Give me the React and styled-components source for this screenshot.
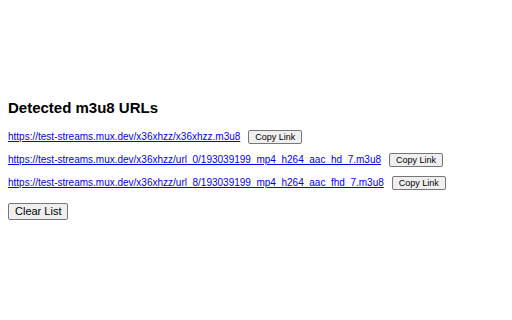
import React, { useState } from 'react';
import styled, { createGlobalStyle } from 'styled-components';

const GlobalStyle = createGlobalStyle`
  html, body {
    margin: 0;
    background: #ffffff;
  }
  body {
    font-family: "Liberation Sans", Arial, sans-serif;
  }
`;

const Container = styled.div`
  padding: 97px 8px 0 8px;
`;

const Title = styled.h2`
  margin: 0 0 7px 0;
  font-size: 15px;
  font-weight: bold;
  color: #000;
  line-height: 21px;
`;

const Row = styled.div`
  display: flex;
  align-items: center;
  gap: 8px;
  height: 23px;
`;

const UrlLink = styled.a`
  font-size: 10px;
  color: #0000ee;
  text-decoration: underline;
`;

const Button = styled.button`
  font-family: "Liberation Sans", Arial, sans-serif;
  font-size: ${(p) => (p.$big ? '11px' : '9px')};
  line-height: ${(p) => (p.$big ? '13px' : '10px')};
  padding: 1px 6px;
  border: 1px solid #767676;
  border-radius: 2px;
  background: #efefef;
  color: #000;
  cursor: pointer;
`;

const Footer = styled.div`
  display: flex;
  margin-top: 9px;
`;

const initialUrls = [
  'https://test-streams.mux.dev/x36xhzz/x36xhzz.m3u8',
  'https://test-streams.mux.dev/x36xhzz/url_0/193039199_mp4_h264_aac_hd_7.m3u8',
  'https://test-streams.mux.dev/x36xhzz/url_8/193039199_mp4_h264_aac_fhd_7.m3u8',
];

const App = () => {
  const [urls, setUrls] = useState(initialUrls);

  const copy = (url) => {
    if (navigator.clipboard) navigator.clipboard.writeText(url).catch(() => {});
  };

  return (
    <>
      <GlobalStyle />
      <Container>
        <Title>Detected m3u8 URLs</Title>
        {urls.map((url) => (
          <Row key={url}>
            <UrlLink href={url}>{url}</UrlLink>
            <Button onClick={() => copy(url)}>Copy Link</Button>
          </Row>
        ))}
        <Footer>
          <Button $big onClick={() => setUrls([])}>Clear List</Button>
        </Footer>
      </Container>
    </>
  );
};

export default App;
